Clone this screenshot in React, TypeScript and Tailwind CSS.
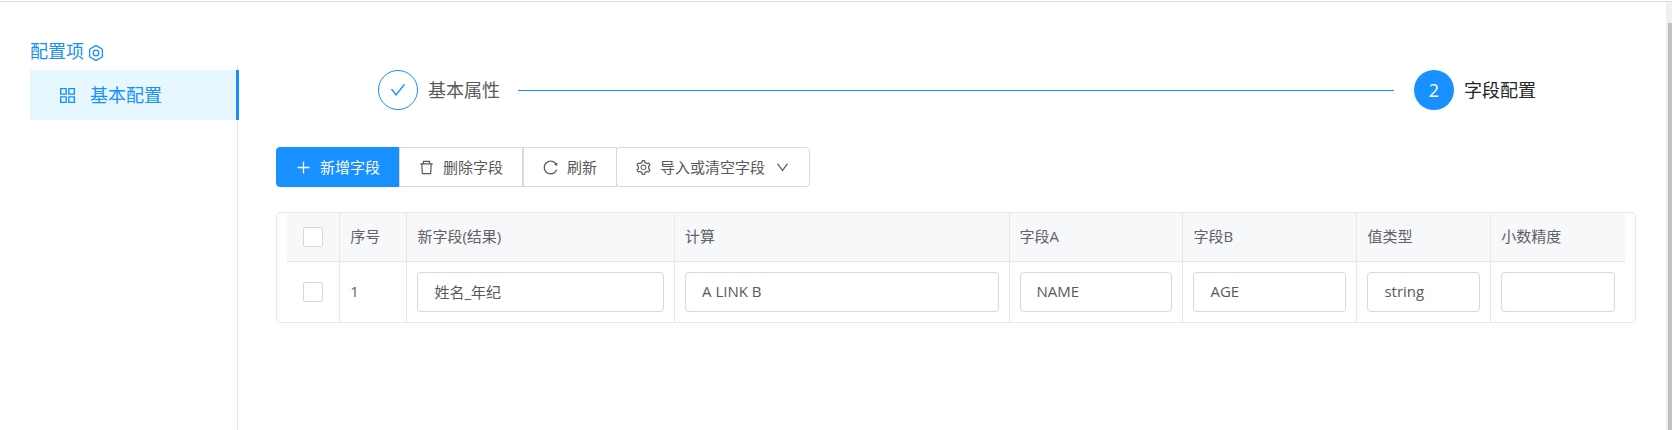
import { useState } from "react";
import {
  AiOutlineAppstore,
  AiOutlineCheck,
  AiOutlineDelete,
  AiOutlineDown,
  AiOutlinePlus,
  AiOutlineReload,
  AiOutlineSetting,
} from "react-icons/ai";

type FieldRow = {
  id: number;
  result: string;
  calc: string;
  fieldA: string;
  fieldB: string;
  type: string;
  precision: string;
};

type EditableKey = Exclude<keyof FieldRow, "id">;

const columns: { key: EditableKey; label: string; width: string }[] = [
  { key: "result", label: "新字段(结果)", width: "w-[20%]" },
  { key: "calc", label: "计算", width: "w-[25%]" },
  { key: "fieldA", label: "字段A", width: "w-[13%]" },
  { key: "fieldB", label: "字段B", width: "w-[13%]" },
  { key: "type", label: "值类型", width: "w-[10%]" },
  { key: "precision", label: "小数精度", width: "w-[10%]" },
];

const initialRows: FieldRow[] = [
  { id: 1, result: "姓名_年纪", calc: "A LINK B", fieldA: "NAME", fieldB: "AGE", type: "string", precision: "" },
];

const toolButton = "flex h-10 items-center gap-2 border pl-[18px] pr-[19px]";
const plainButton = "border-[#d9d9d9] bg-white hover:text-[#1890ff]";

const HexagonIcon = () => (
  <svg width="16" height="16" viewBox="0 0 16 16" fill="none" stroke="currentColor" strokeWidth="1.3" strokeLinejoin="round">
    <path d="M7.3 0.9a1.4 1.4 0 0 1 1.4 0l5 2.9a1.4 1.4 0 0 1 .7 1.2v6a1.4 1.4 0 0 1-.7 1.2l-5 2.9a1.4 1.4 0 0 1-1.4 0l-5-2.9a1.4 1.4 0 0 1-.7-1.2V5a1.4 1.4 0 0 1 .7-1.2z" />
    <circle cx="8" cy="8" r="2.8" />
  </svg>
);

const Checkbox = ({ label, checked, onChange }: { label: string; checked: boolean; onChange: () => void }) => (
  <input
    type="checkbox"
    aria-label={label}
    checked={checked}
    onChange={onChange}
    className="block mx-auto size-5 appearance-none rounded-xs border border-[#d9d9d9] bg-white checked:border-[#1890ff] checked:bg-[#1890ff]"
  />
);

const Sidebar = () => (
  <aside className="flex w-[238px] shrink-0 flex-col pl-[30px]">
    <h2 className="flex h-[63px] items-end gap-1 text-lg text-[#1890ff]">
      配置项
      <span className="flex h-7 items-center pt-1">
        <HexagonIcon />
      </span>
    </h2>
    <nav className="flex-1 border-r border-[#e8e8e8] pt-[5px]">
      <a
        href="#basic"
        className="-mr-[2px] flex h-[50px] items-center gap-3 border-r-[3px] border-[#1890ff] bg-[#e6f7ff] pl-[27px] text-lg text-[#1890ff]"
      >
        <AiOutlineAppstore size={21} />
        基本配置
      </a>
    </nav>
  </aside>
);

const Steps = () => (
  <ol className="flex items-center pr-[100px] pl-[102px] text-lg">
    <li className="flex flex-1 items-center text-[#595959]">
      <span className="flex size-10 items-center justify-center rounded-full border border-[#1890ff] text-[#1890ff]">
        <AiOutlineCheck size={18} />
      </span>
      <span className="ml-[10px]">基本属性</span>
      <span className="mr-5 ml-[18px] h-px flex-1 bg-[#1890ff]" />
    </li>
    <li className="flex items-center text-[#262626]">
      <span className="flex size-10 items-center justify-center rounded-full bg-[#1890ff] text-white">2</span>
      <span className="ml-[10px]">字段配置</span>
    </li>
  </ol>
);

const Toolbar = ({ onAdd, onDelete, onRefresh }: { onAdd: () => void; onDelete: () => void; onRefresh: () => void }) => (
  <div className="mt-[37px] flex text-[15px] text-[#595959]">
    <button type="button" onClick={onAdd} className={`${toolButton} rounded-l border-[#1890ff] bg-[#1890ff] text-white`}>
      <AiOutlinePlus size={17} />
      新增字段
    </button>
    <button type="button" onClick={onDelete} className={`${toolButton} ${plainButton} -ml-px`}>
      <AiOutlineDelete size={17} />
      删除字段
    </button>
    <button type="button" onClick={onRefresh} className={`${toolButton} ${plainButton}`}>
      <AiOutlineReload size={17} />
      刷新
    </button>
    <button type="button" className={`${toolButton} ${plainButton} -ml-px rounded`}>
      <AiOutlineSetting size={17} />
      导入或清空字段
      <AiOutlineDown size={15} className="ml-[2px]" />
    </button>
  </div>
);

const App = () => {
  const [rows, setRows] = useState<FieldRow[]>(initialRows);
  const [selected, setSelected] = useState<number[]>([]);

  const allSelected = rows.length > 0 && selected.length === rows.length;

  const toggle = (id: number) =>
    setSelected((s) => (s.includes(id) ? s.filter((x) => x !== id) : [...s, id]));

  const update = (id: number, key: EditableKey, value: string) =>
    setRows((rs) => rs.map((r) => (r.id === id ? { ...r, [key]: value } : r)));

  const addRow = () =>
    setRows((rs) => [
      ...rs,
      { id: Math.max(0, ...rs.map((r) => r.id)) + 1, result: "", calc: "", fieldA: "", fieldB: "", type: "", precision: "" },
    ]);

  const deleteRows = () => {
    setRows((rs) => rs.filter((r) => !selected.includes(r.id)));
    setSelected([]);
  };

  return (
    <div className="flex min-h-screen flex-col bg-white pt-px font-['Open_Sans','Noto_Sans_CJK_SC',sans-serif]">
      <div className="h-px bg-[#d9d9d9]" />
      <div className="flex flex-1">
        <Sidebar />
        <main className="min-w-0 flex-1 pt-[68px] pr-[30px] pl-[38px]">
          <Steps />
          <Toolbar onAdd={addRow} onDelete={deleteRows} onRefresh={() => setRows(initialRows)} />

          {/* Field table */}
          <div className="mt-[25px] rounded border border-[#e8e8e8] px-[10px]">
            <table className="w-full table-fixed border-separate border-spacing-0 text-[15px] text-[#606266]">
              <thead>
                <tr className="h-[49px] bg-[#f7f8fa] text-left">
                  <th className="w-[53px] border-r border-b border-[#e8e8e8]">
                    <Checkbox
                      label="全选"
                      checked={allSelected}
                      onChange={() => setSelected(allSelected ? [] : rows.map((r) => r.id))}
                    />
                  </th>
                  <th className="w-[67px] border-r border-b border-[#e8e8e8] px-[10px] pb-[2px] font-normal">序号</th>
                  {columns.map((c) => (
                    <th key={c.key} className={`${c.width} border-r border-b border-[#e8e8e8] px-[10px] pb-[2px] font-normal last:border-r-0`}>
                      {c.label}
                    </th>
                  ))}
                </tr>
              </thead>
              <tbody>
                {rows.map((r, i) => (
                  <tr key={r.id} className="h-[60px]">
                    <td className="border-r border-[#e8e8e8]">
                      <Checkbox label={`选择 ${i + 1}`} checked={selected.includes(r.id)} onChange={() => toggle(r.id)} />
                    </td>
                    <td className="border-r border-[#e8e8e8] px-[10px] pb-[2px]">{i + 1}</td>
                    {columns.map((c) => (
                      <td key={c.key} className="border-r border-[#e8e8e8] px-[10px] last:border-r-0">
                        <input
                          type="text"
                          aria-label={c.label}
                          value={r[c.key]}
                          onChange={(e) => update(r.id, c.key, e.target.value)}
                          className="block h-10 w-full rounded border border-[#d9d9d9] px-4 pb-[2px] text-[#595959] outline-none focus:border-[#1890ff]"
                        />
                      </td>
                    ))}
                  </tr>
                ))}
              </tbody>
            </table>
          </div>
        </main>
        {/* Scroll track */}
        <div className="flex w-[6px] shrink-0 flex-col bg-[#f0f0f0] pt-[21px] pl-[2px]">
          <div className="flex-1 bg-[#c1c1c1]" />
        </div>
      </div>
    </div>
  );
};

export default App;
